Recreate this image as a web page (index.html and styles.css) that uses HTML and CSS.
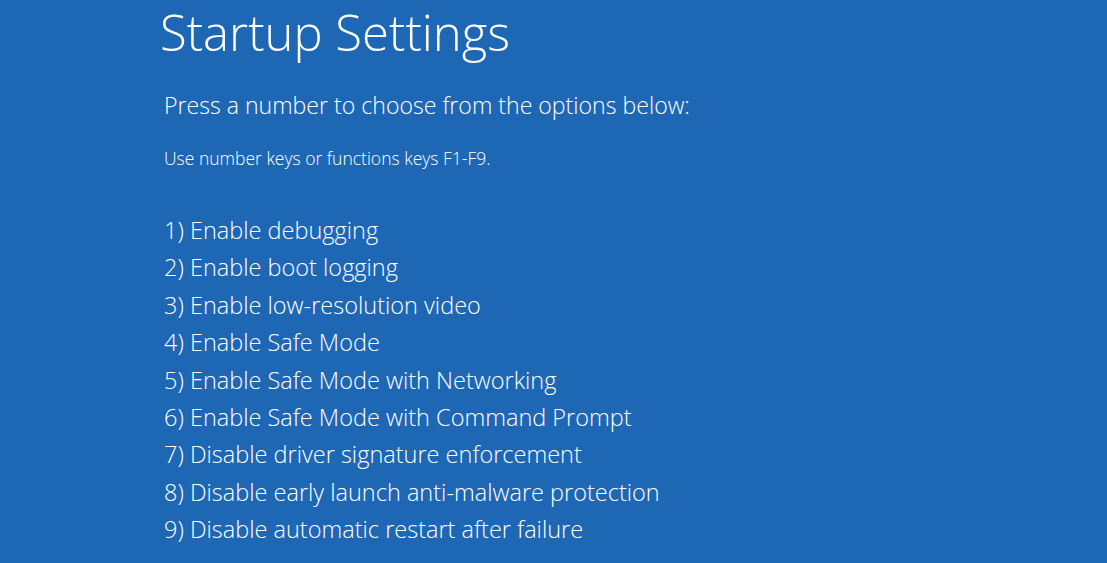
FILE: index.html
```html
<!DOCTYPE html>
<html lang="en">
<head>
<meta charset="utf-8">
<title>Startup Settings</title>
<link rel="stylesheet" href="styles.css">
</head>
<body>
<main class="screen">
  <h1 class="title">Startup Settings</h1>
  <p class="lead">Press a number to choose from the options below:</p>
  <p class="hint">Use number keys or functions keys F1-F9.</p>
  <ol class="options">
    <li>1) Enable debugging</li>
    <li>2) Enable boot logging</li>
    <li>3) Enable low-resolution video</li>
    <li>4) Enable Safe Mode</li>
    <li>5) Enable Safe Mode with Networking</li>
    <li>6) Enable Safe Mode with Command Prompt</li>
    <li>7) Disable driver signature enforcement</li>
    <li>8) Disable early launch anti-malware protection</li>
    <li>9) Disable automatic restart after failure</li>
  </ol>
</main>
</body>
</html>
```

FILE: styles.css
```css
html, body {
  margin: 0;
  padding: 0;
  height: 100%;
  background: #1e67b4;
}
body {
  color: #ffffff;
  font-family: "Open Sans", "Noto Sans", sans-serif;
  overflow: hidden;
}
.screen {
  display: flex;
  flex-direction: column;
  padding: 0 0 0 160px;
}
.title {
  margin: 0;
  font-size: 49px;
  font-weight: 300;
  line-height: 64px;
}
.lead {
  margin: 26px 0 0 4px;
  font-size: 23.1px;
  font-weight: 300;
  line-height: 30px;
}
.hint {
  margin: 28px 0 0 4px;
  font-size: 17.5px;
  font-weight: 300;
  line-height: 20px;
}
.options {
  list-style: none;
  margin: 44px 0 0 4px;
  padding: 0;
  display: flex;
  flex-direction: column;
  font-size: 23.5px;
  font-weight: 300;
  line-height: 37.4px;
}
```
